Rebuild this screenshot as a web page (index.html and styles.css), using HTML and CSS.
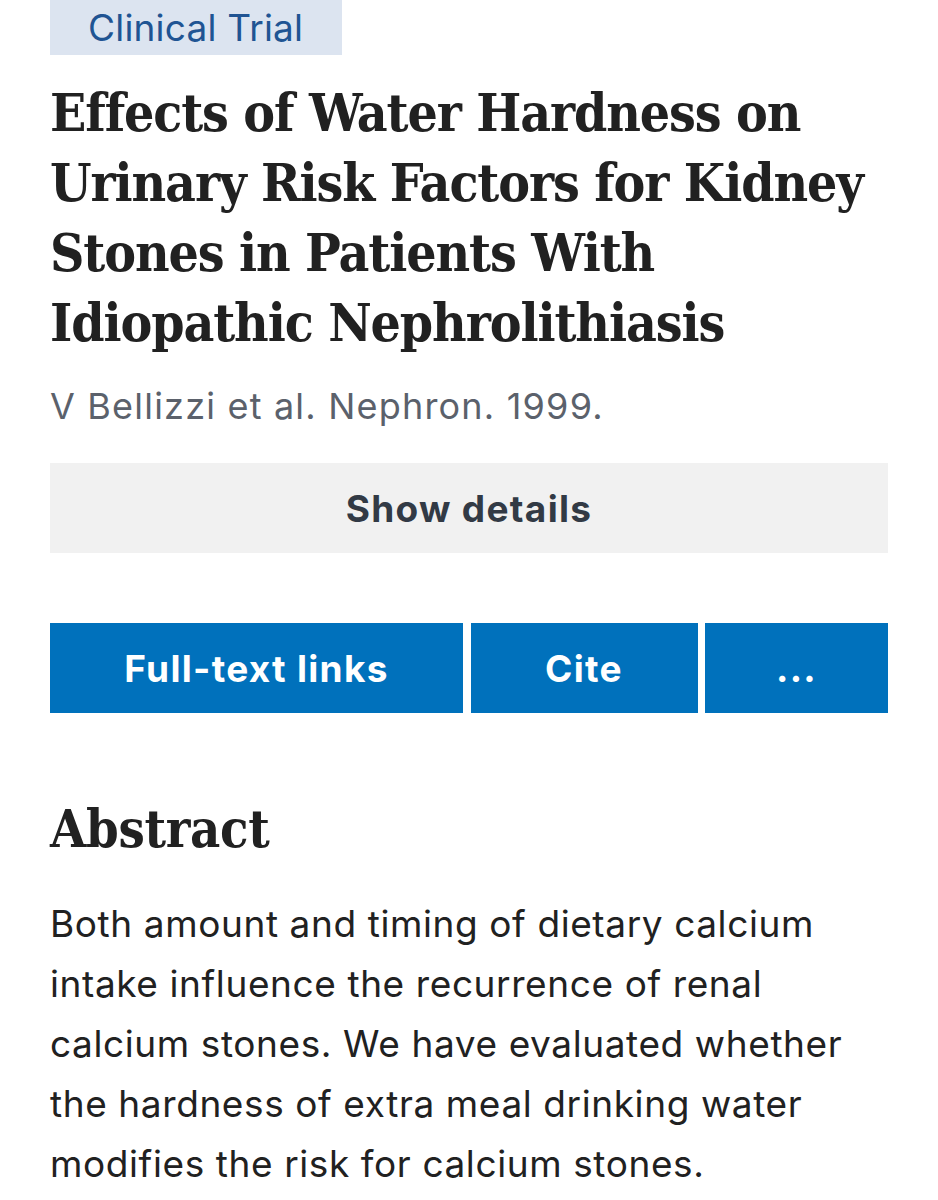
FILE: index.html
```html
<!DOCTYPE html>
<html lang="en">
<head>
<meta charset="utf-8">
<title>Effects of Water Hardness on Urinary Risk Factors for Kidney Stones</title>
<link rel="stylesheet" href="styles.css">
</head>
<body>
<main class="article">
  <div class="pub-type">Clinical Trial</div>
  <h1 class="title">Effects of Water Hardness on Urinary Risk Factors for Kidney Stones in Patients With Idiopathic Nephrolithiasis</h1>
  <p class="cit">V Bellizzi et al. Nephron. 1999.</p>
  <button class="details-btn" type="button">Show details</button>
  <div class="actions">
    <button class="action action-links" type="button">Full-text links</button>
    <button class="action action-cite" type="button">Cite</button>
    <button class="action action-more" type="button">...</button>
  </div>
  <h2 class="abstract-title">Abstract</h2>
  <p class="abstract">Both amount and timing of dietary calcium intake influence the recurrence of renal calcium stones. We have evaluated whether the hardness of extra meal drinking water modifies the risk for calcium stones.</p>
</main>
</body>
</html>
```

FILE: styles.css
```css
html, body {
  margin: 0;
  padding: 0;
  background: #ffffff;
}

body {
  font-family: "Inter", "Liberation Sans", sans-serif;
  color: #212121;
}

.article {
  width: 838px;
  padding: 0 50px;
  display: flex;
  flex-direction: column;
  align-items: flex-start;
}

.pub-type {
  background: #dce4f0;
  color: #205493;
  font-size: 37px;
  letter-spacing: 0.2px;
  line-height: 55px;
  height: 55px;
  padding: 0 38px;
  box-sizing: border-box;
  width: 292px;
  white-space: nowrap;
}

.title {
  margin: 22px 0 0;
  font-family: "DejaVu Serif Condensed", "DejaVu Serif", serif;
  font-stretch: condensed;
  font-weight: bold;
  font-size: 53px;
  letter-spacing: -1.1px;
  line-height: 70px;
  color: #212121;
}

.cit {
  margin: 24px 0 0;
  font-size: 36px;
  letter-spacing: 1.2px;
  line-height: 50px;
  color: #5b616b;
}

.details-btn {
  margin-top: 32px;
  width: 838px;
  height: 90px;
  border: 0;
  background: #f1f1f1;
  color: #323a45;
  font-family: inherit;
  font-weight: 700;
  font-size: 37px;
  letter-spacing: 1.3px;
  padding: 0;
}

.actions {
  margin-top: 70px;
  width: 838px;
  display: grid;
  grid-template-columns: 413px 227px 183px;
  column-gap: 7.5px;
}

.action {
  height: 90px;
  border: 0;
  padding: 0;
  background: #0071bc;
  color: #ffffff;
  font-family: inherit;
  font-weight: 700;
  font-size: 37px;
  letter-spacing: 1.3px;
}

.abstract-title {
  margin: 86px 0 0;
  font-family: "DejaVu Serif Condensed", "DejaVu Serif", serif;
  font-stretch: condensed;
  font-weight: bold;
  font-size: 52px;
  letter-spacing: -0.3px;
  line-height: 60px;
  color: #212121;
}

.abstract {
  margin: 35px 0 0;
  font-size: 37px;
  letter-spacing: 0.6px;
  line-height: 60px;
  color: #212121;
}
```
